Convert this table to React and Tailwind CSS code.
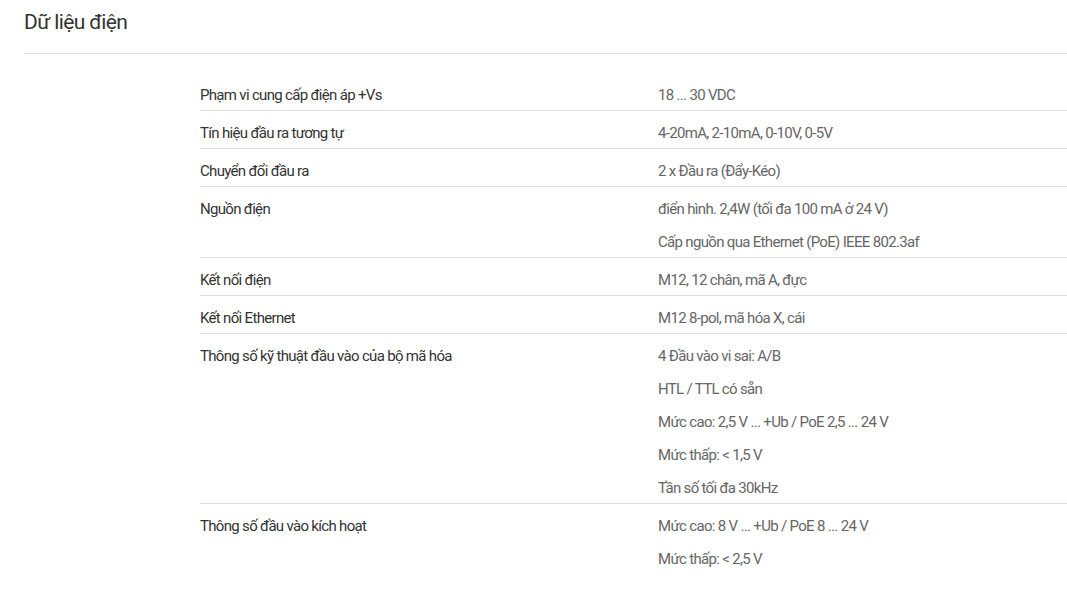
const rows = [
  { label: "Phạm vi cung cấp điện áp +Vs", values: ["18 ... 30 VDC"] },
  { label: "Tín hiệu đầu ra tương tự", values: ["4-20mA, 2-10mA, 0-10V, 0-5V"] },
  { label: "Chuyển đổi đầu ra", values: ["2 x Đầu ra (Đẩy-Kéo)"] },
  {
    label: "Nguồn điện",
    values: ["điển hình. 2,4W (tối đa 100 mA ở 24 V)", "Cấp nguồn qua Ethernet (PoE) IEEE 802.3af"],
  },
  { label: "Kết nối điện", values: ["M12, 12 chân, mã A, đực"] },
  { label: "Kết nối Ethernet", values: ["M12 8-pol, mã hóa X, cái"] },
  {
    label: "Thông số kỹ thuật đầu vào của bộ mã hóa",
    values: [
      "4 Đầu vào vi sai: A/B",
      "HTL / TTL có sẵn",
      "Mức cao: 2,5 V ... +Ub / PoE 2,5 ... 24 V",
      "Mức thấp: < 1,5 V",
      "Tần số tối đa 30kHz",
    ],
  },
  { label: "Thông số đầu vào kích hoạt", values: ["Mức cao: 8 V ... +Ub / PoE 8 ... 24 V", "Mức thấp: < 2,5 V"] },
];

export default function App() {
  return (
    <div className="min-h-screen bg-white pl-6 font-['Roboto',sans-serif]">
      {/* Title */}
      <div className="border-b border-[#e0e0e0] h-[54px] flex items-center pb-[8px]">
        <h2 className="text-[21px] text-[#333] tracking-[-0.6px]">Dữ liệu điện</h2>
      </div>

      {/* Spec table */}
      <div className="ml-[176px] mt-[19px]">
        {rows.map((row, i) => (
          <div
            key={row.label}
            className={`flex pt-[6px] text-[15px] tracking-[-0.68px] ${i < rows.length - 1 ? "border-b border-[#e0e0e0]" : ""}`}
          >
            <div className="w-[458px] shrink-0 text-[#333] leading-[33px] -mb-[2px]">{row.label}</div>
            <div className="flex-1 text-[#666] -mb-[2px]">
              {row.values.map((v) => (
                <div key={v} className="leading-[33px]">{v}</div>
              ))}
            </div>
          </div>
        ))}
      </div>
    </div>
  );
}
